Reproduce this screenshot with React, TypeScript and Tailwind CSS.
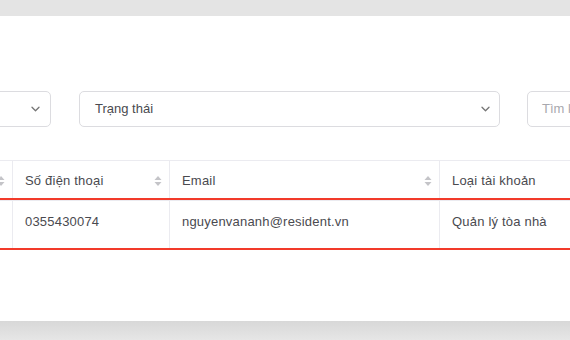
import React from "react";

const Chevron = () => (
  <svg width="9" height="6" viewBox="0 0 9 6" fill="none" className="shrink-0">
    <path d="M1 1.2l3.5 3.5L8 1.2" stroke="#757575" strokeWidth="1.3" strokeLinecap="round" strokeLinejoin="round" />
  </svg>
);

const SortIcon = () => (
  <svg width="8" height="12" viewBox="0 0 8 12" className="shrink-0">
    <path d="M4 1L7.5 5H0.5z" fill="#c4c4c8" />
    <path d="M4 11L7.5 7H0.5z" fill="#c4c4c8" />
  </svg>
);

const HeaderCell = ({ label, width, sort = true }: { label: string; width: string; sort?: boolean }) => (
  <div className={`${width} shrink-0 flex items-center justify-between pt-[3px] pl-3 pr-[7px] border-r border-[#ebebf0]`}>
    <span>{label}</span>
    {sort && <SortIcon />}
  </div>
);

const BodyCell = ({ value, width }: { value: string; width: string }) => (
  <div className={`${width} shrink-0 flex items-center pb-[5px] pl-3 border-r border-[#ebebf0]`}>
    <span>{value}</span>
  </div>
);

const App = () => {
  return (
    <div
      className="h-[340px] w-[570px] overflow-hidden bg-[#e4e4e4] pt-4"
      style={{ fontFamily: '"Liberation Sans", Arial, sans-serif' }}
    >
      <div className="h-[305px] bg-white overflow-hidden">
        <div className="-ml-[200px] w-[1100px] pt-[75px]">
          {/* filters */}
          <div className="flex gap-[28px] h-9">
            <div className="w-[251px] flex items-center justify-end pr-[10px] border border-[#dcdce0] rounded-[5px]">
              <Chevron />
            </div>
            <div className="w-[421px] flex items-center justify-between pl-[15px] pr-[9px] border border-[#dcdce0] rounded-[5px] text-[13px] text-[#4a4a4f]">
              <span>Trạng thái</span>
              <Chevron />
            </div>
            <div className="ml-[-1px] w-[240px] flex items-center pl-[14px] border border-[#dcdce0] rounded-[5px] text-[13px] text-[#a8a8ae]">
              <span>Tìm kiếm</span>
            </div>
          </div>

          {/* table */}
          <div className="mt-[33px] text-[13px] text-[#4a4a4f] tracking-[0.2px]">
            <div className="flex h-[38px] border-t border-[#ebebf0]">
              <HeaderCell label="" width="w-[213px]" />
              <HeaderCell label="Số điện thoại" width="w-[157px]" />
              <HeaderCell label="Email" width="w-[270px]" />
              <HeaderCell label="Loại tài khoản" width="w-[200px]" sort={false} />
            </div>
            <div className="border-y-2 border-[#f23a2a]">
              <div className="flex h-[48px] border-t border-[#ebebf0]">
                <BodyCell value="" width="w-[213px]" />
                <BodyCell value="0355430074" width="w-[157px]" />
                <BodyCell value="nguyenvananh@resident.vn" width="w-[270px]" />
                <BodyCell value="Quản lý tòa nhà" width="w-[200px]" />
              </div>
            </div>
          </div>
        </div>
      </div>
      <div className="h-[19px] bg-gradient-to-b from-[#d8d8d8] to-[#e6e6e6]" />
    </div>
  );
};

export default App;
